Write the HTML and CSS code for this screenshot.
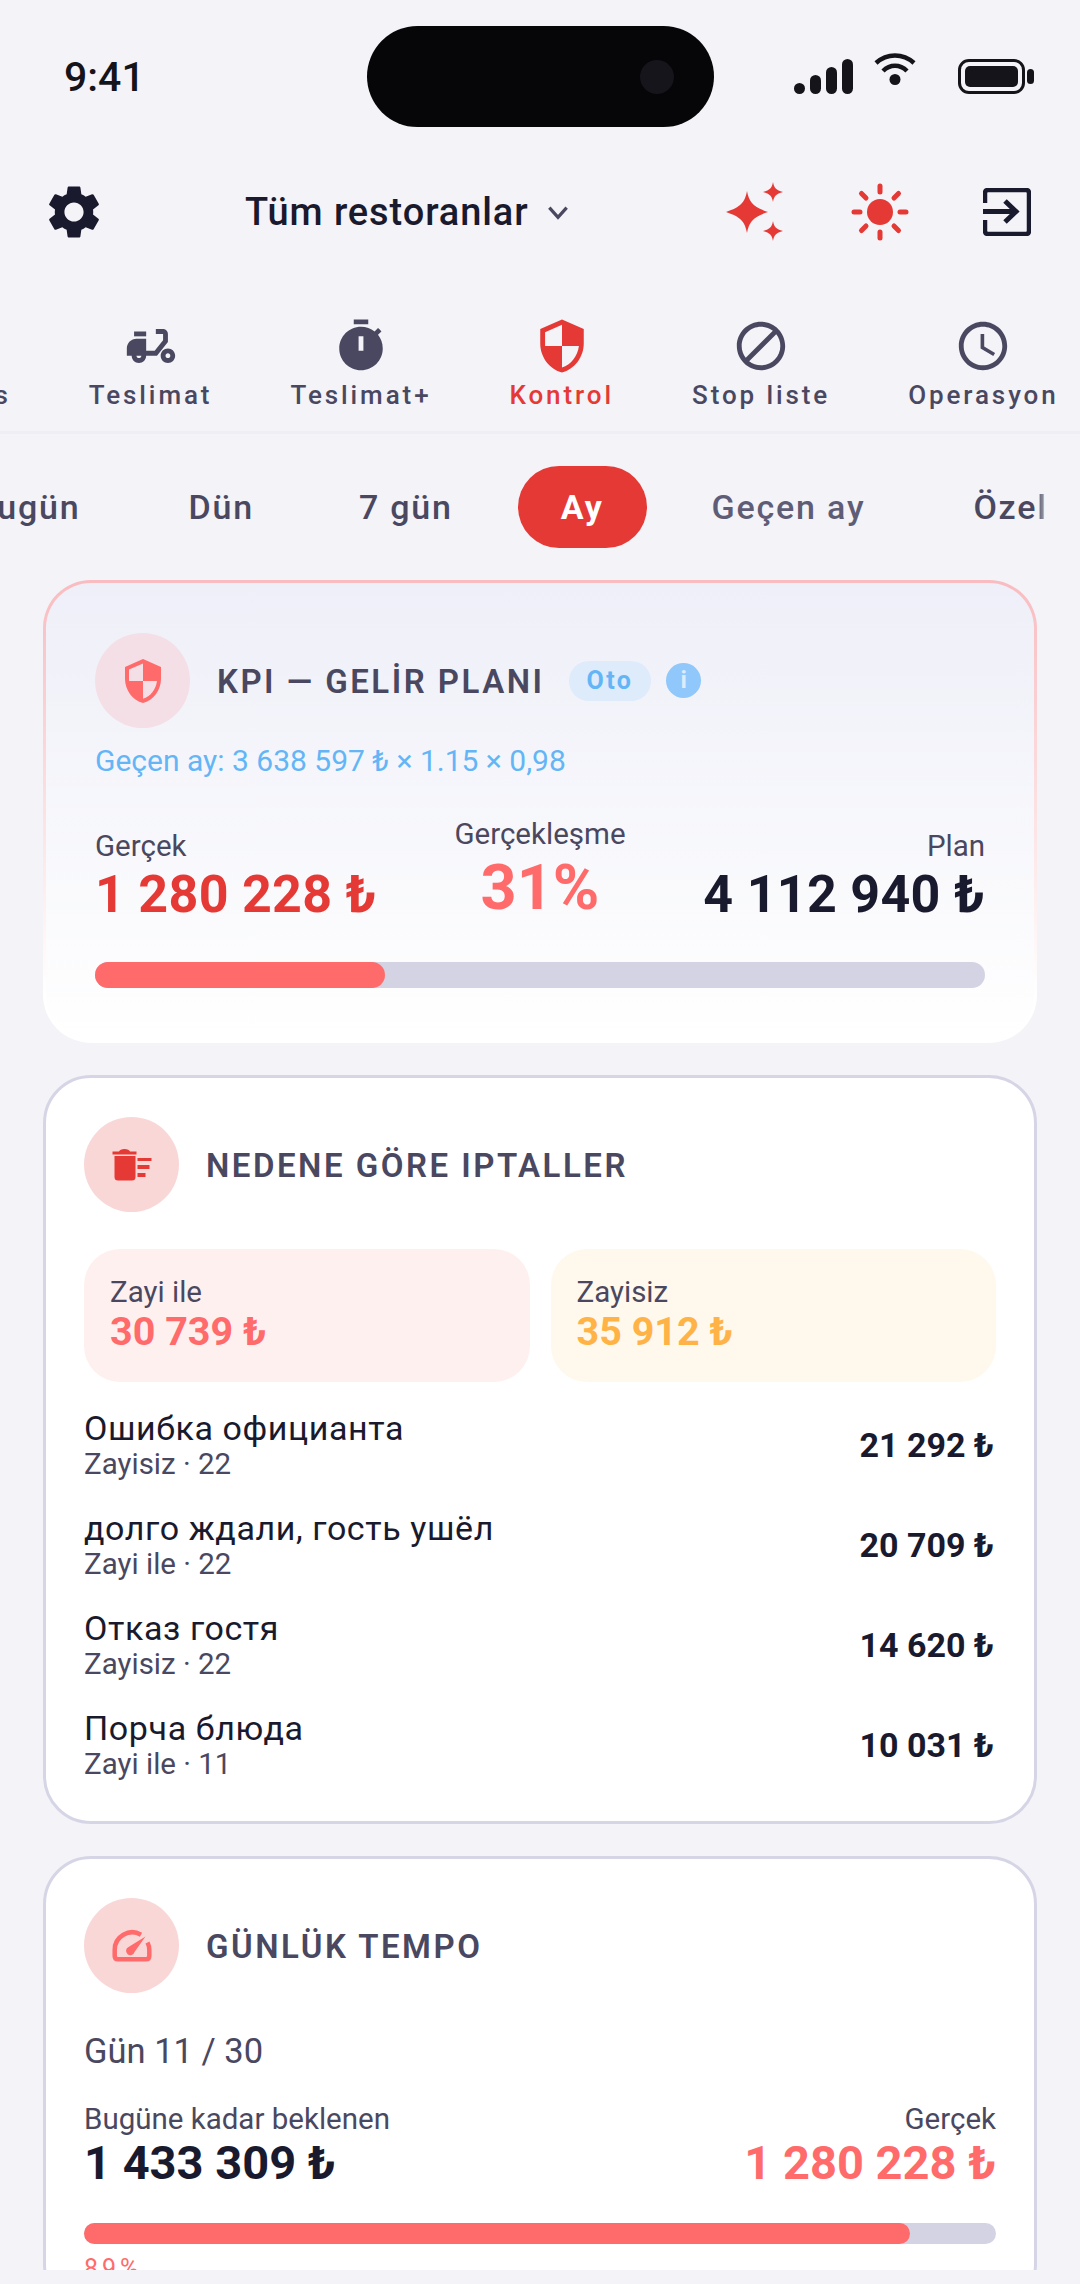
FILE: index.html
```html
<!DOCTYPE html>
<html lang="tr">
<head>
    <meta charset="UTF-8">
    <meta name="viewport" content="width=device-width, initial-scale=1.0">
    <title>Kontrol</title>
    <link rel="stylesheet" href="styles.css">
</head>
<body>
    <div class="status-bar">
        <div class="status-time">9:41</div>
        <div class="island"><span class="island-camera"></span></div>
        <div class="status-icons">
            <div class="signal">
                <span class="signal-bar signal-1"></span>
                <span class="signal-bar signal-2"></span>
                <span class="signal-bar signal-3"></span>
                <span class="signal-bar signal-4"></span>
            </div>
            <svg class="wifi" viewBox="0 0 44 36" width="44" height="36">
                <path d="M3 13C14 3 30 3 41 13" fill="none" stroke="#14141a" stroke-width="4.5"/>
                <path d="M10 21C17 14 27 14 34 21" fill="none" stroke="#14141a" stroke-width="4.5"/>
                <circle cx="22" cy="29.5" r="5.5" fill="#14141a"/>
            </svg>
            <div class="battery"><span class="battery-fill"></span></div>
            <span class="battery-cap"></span>
        </div>
    </div>

    <header class="top-bar">
        <svg class="gear" viewBox="0 0 24 24" width="64" height="64">
            <path fill="#1a1a2e" d="M19.14,12.94c0.04-0.3,0.06-0.61,0.06-0.94c0-0.32-0.02-0.64-0.07-0.94l2.03-1.58c0.18-0.14,0.23-0.41,0.12-0.61 l-1.92-3.32c-0.12-0.22-0.37-0.29-0.59-0.22l-2.39,0.96c-0.5-0.38-1.03-0.7-1.62-0.94L14.4,2.81c-0.04-0.24-0.24-0.41-0.48-0.41 h-3.84c-0.24,0-0.43,0.17-0.47,0.41L9.25,5.35C8.66,5.59,8.12,5.92,7.63,6.29L5.24,5.33c-0.22-0.08-0.47,0-0.59,0.22L2.74,8.87 C2.62,9.08,2.66,9.34,2.86,9.48l2.03,1.58C4.84,11.36,4.8,11.69,4.8,12s0.02,0.64,0.07,0.94l-2.03,1.58 c-0.18,0.14-0.23,0.41-0.12,0.61l1.92,3.32c0.12,0.22,0.37,0.29,0.59,0.22l2.39-0.96c0.5,0.38,1.03,0.7,1.62,0.94l0.36,2.54 c0.05,0.24,0.24,0.41,0.48,0.41h3.84c0.24,0,0.44-0.17,0.47-0.41l0.36-2.54c0.59-0.24,1.13-0.56,1.62-0.94l2.39,0.96 c0.22,0.08,0.47,0,0.59-0.22l1.92-3.32c0.12-0.22,0.07-0.47-0.12-0.61L19.14,12.94z M12,15.6c-1.98,0-3.6-1.62-3.6-3.6 s1.62-3.6,3.6-3.6s3.6,1.62,3.6,3.6S13.98,15.6,12,15.6z"/>
        </svg>
        <div class="place-picker">
            <span class="place-name">Tüm restoranlar</span>
            <svg viewBox="0 0 24 24" width="26" height="26"><path d="M4 8l8 9 8-9" fill="none" stroke="#4a4860" stroke-width="3"/></svg>
        </div>
        <svg class="sparkles" viewBox="0 0 60 60" width="60" height="60">
            <path fill="#e53935" d="M21 9C23 20 27 25 42 30 27 35 23 40 21 51 19 40 15 35 0 30 15 25 19 20 21 9Z"/>
            <path fill="#e53935" d="M47 0C48 6 50 8 57 10 50 12 48 14 47 20 46 14 44 12 37 10 44 8 46 6 47 0Z"/>
            <path fill="#e53935" d="M47 39C48 45 50 47 57 49 50 51 48 53 47 59 46 53 44 51 37 49 44 47 46 45 47 39Z"/>
        </svg>
        <svg class="sun" viewBox="0 0 60 60" width="60" height="60">
            <circle cx="30" cy="30" r="13" fill="#e53935"/>
            <g stroke="#e53935" stroke-width="5" stroke-linecap="round">
                <path d="M30 4V10M30 50V56M4 30H10M50 30H56M11.5 11.5L16 16M44 44L48.5 48.5M48.5 11.5L44 16M16 44L11.5 48.5"/>
            </g>
        </svg>
        <svg class="exit" viewBox="0 0 48 48" width="48" height="48">
            <path d="M2 15V5Q2 2 5 2H43Q46 2 46 5V43Q46 46 43 46H5Q2 46 2 43V32" fill="none" stroke="#1a1a2e" stroke-width="4.5"/>
            <path d="M0 23.5H32M22 13L33 23.5 22 34" fill="none" stroke="#1a1a2e" stroke-width="5"/>
        </svg>
    </header>

    <nav class="tabs">
        <div class="tab tab-first">
            <span class="tab-icon"></span>
            <span class="tab-label">Finans</span>
        </div>
        <div class="tab">
            <svg class="tab-icon" viewBox="0 0 24 24"><path d="M19,7c0-1.1-0.9-2-2-2h-3v2h3v2.65L13.52,14H10V9H6c-2.21,0-4,1.79-4,4v3h2c0,1.66,1.34,3,3,3s3-1.34,3-3h4.48L19,10.35V7z M7,17c-0.55,0-1-0.45-1-1h2C8,16.55,7.55,17,7,17z"/><rect x="5" y="6" width="5" height="2"/><path d="M19,13c-1.66,0-3,1.34-3,3s1.34,3,3,3s3-1.34,3-3S20.66,13,19,13z M19,17c-0.55,0-1-0.45-1-1s0.45-1,1-1s1,0.45,1,1S19.55,17,19,17z"/></svg>
            <span class="tab-label">Teslimat</span>
        </div>
        <div class="tab">
            <svg class="tab-icon" viewBox="0 0 24 24"><path d="M15 1H9v2h6V1zm4.03 6.39l1.42-1.42c-.43-.51-.9-.99-1.41-1.41l-1.42 1.42C16.07 4.74 14.12 4 12 4c-4.97 0-9 4.03-9 9s4.02 9 9 9 9-4.03 9-9c0-2.12-.74-4.07-1.97-5.61zM13 14h-2V8h2v6z"/></svg>
            <span class="tab-label">Teslimat+</span>
        </div>
        <div class="tab tab-active">
            <svg class="tab-icon" viewBox="0 0 24 24"><path d="M12 1L3 5v6c0 5.55 3.84 10.74 9 12 5.16-1.26 9-6.45 9-12V5l-9-4zm0 10.99h7c-.53 4.12-3.28 7.79-7 8.94V12H5V6.3l7-3.11v8.8z"/></svg>
            <span class="tab-label">Kontrol</span>
        </div>
        <div class="tab">
            <svg class="tab-icon" viewBox="0 0 24 24"><path d="M12 2C6.48 2 2 6.48 2 12s4.48 10 10 10 10-4.48 10-10S17.52 2 12 2zM4 12c0-4.42 3.58-8 8-8 1.85 0 3.55.63 4.9 1.69L5.69 16.9C4.63 15.55 4 13.85 4 12zm8 8c-1.85 0-3.55-.63-4.9-1.69L18.31 7.1C19.37 8.45 20 10.15 20 12c0 4.42-3.58 8-8 8z"/></svg>
            <span class="tab-label">Stop liste</span>
        </div>
        <div class="tab">
            <svg class="tab-icon" viewBox="0 0 24 24"><path d="M11.99 2C6.47 2 2 6.48 2 12s4.47 10 9.99 10C17.52 22 22 17.52 22 12S17.52 2 11.99 2zM12 20c-4.42 0-8-3.58-8-8s3.58-8 8-8 8 3.58 8 8-3.58 8-8 8z"/><path d="M12.5 7H11v6l5.25 3.15.75-1.23-4.5-2.67z"/></svg>
            <span class="tab-label">Operasyon</span>
        </div>
    </nav>

    <div class="periods">
        <span class="period period-first">Bugün</span>
        <span class="period">Dün</span>
        <span class="period period-week">7 gün</span>
        <span class="period period-active">Ay</span>
        <span class="period period-soft">Geçen ay</span>
        <span class="period">Özel</span>
        <span class="periods-fade"></span>
    </div>

    <main class="content">
        <section class="card card-kpi">
            <div class="card-head">
                <div class="head-icon head-icon-kpi">
                    <svg viewBox="0 0 24 24" width="48" height="48"><path fill="#ff6b6b" d="M12 1L3 5v6c0 5.55 3.84 10.74 9 12 5.16-1.26 9-6.45 9-12V5l-9-4zm0 10.99h7c-.53 4.12-3.28 7.79-7 8.94V12H5V6.3l7-3.11v8.8z"/></svg>
                </div>
                <h2 class="card-title">KPI — GELİR PLANI</h2>
                <span class="auto-badge">Oto</span>
                <span class="info-dot">i</span>
            </div>
            <div class="kpi-formula">Geçen ay: 3 638 597 ₺ × 1.15 × 0,98</div>
            <div class="kpi-stats">
                <div class="kpi-stat">
                    <div class="label">Gerçek</div>
                    <div class="kpi-value red">1 280 228 ₺</div>
                </div>
                <div class="kpi-stat kpi-stat-middle">
                    <div class="label">Gerçekleşme</div>
                    <div class="kpi-percent">31%</div>
                </div>
                <div class="kpi-stat kpi-stat-right">
                    <div class="label">Plan</div>
                    <div class="kpi-value">4 112 940 ₺</div>
                </div>
            </div>
            <div class="bar bar-kpi"><div class="bar-fill" style="width: 32.6%"></div></div>
        </section>

        <section class="card">
            <div class="card-head">
                <div class="head-icon">
                    <svg viewBox="0 0 24 24" width="48" height="48">
                        <path fill="#e53935" d="M3.25 7.5H13.75V18A1.75 1.75 0 0 1 12 19.75H5A1.75 1.75 0 0 1 3.25 18Z"/>
                        <path fill="#e53935" d="M2.25 5.25H5.5Q6 4 8.25 4 10.5 4 11 5.25H14.25V6.75H2.25Z"/>
                        <path fill="#e53935" d="M14.75 8.5H21.75V10H14.75ZM14.75 12H20.75V14H14.75ZM14.75 16H18.75V18H14.75Z"/>
                    </svg>
                </div>
                <h2 class="card-title">NEDENE GÖRE IPTALLER</h2>
            </div>
            <div class="split">
                <div class="split-box split-red">
                    <div class="label">Zayi ile</div>
                    <div class="split-value coral">30 739 ₺</div>
                </div>
                <div class="split-box split-orange">
                    <div class="label">Zayisiz</div>
                    <div class="split-value orange">35 912 ₺</div>
                </div>
            </div>
            <div class="reason-list">
                <div class="reason">
                    <div>
                        <div class="reason-name">Ошибка официанта</div>
                        <div class="reason-sub">Zayisiz · 22</div>
                    </div>
                    <div class="reason-sum">21 292 ₺</div>
                </div>
                <div class="reason">
                    <div>
                        <div class="reason-name">долго ждали, гость ушёл</div>
                        <div class="reason-sub">Zayi ile · 22</div>
                    </div>
                    <div class="reason-sum">20 709 ₺</div>
                </div>
                <div class="reason">
                    <div>
                        <div class="reason-name">Отказ гостя</div>
                        <div class="reason-sub">Zayisiz · 22</div>
                    </div>
                    <div class="reason-sum">14 620 ₺</div>
                </div>
                <div class="reason">
                    <div>
                        <div class="reason-name">Порча блюда</div>
                        <div class="reason-sub">Zayi ile · 11</div>
                    </div>
                    <div class="reason-sum">10 031 ₺</div>
                </div>
            </div>
        </section>

        <section class="card">
            <div class="card-head">
                <div class="head-icon">
                    <svg viewBox="0 0 48 48" width="48" height="48">
                        <path d="M33 12.7A17.5 17.5 0 0 0 6.7 28V34Q6.7 37.3 10 37.3H38Q41.3 37.3 41.3 34V28Q41.3 24 39.5 20.5" fill="none" stroke="#ff6b6b" stroke-width="4.5"/>
                        <path d="M37.5 14.5L26.5 30A4.3 4.3 0 1 1 20.5 25Z" fill="#ff6b6b"/>
                    </svg>
                </div>
                <h2 class="card-title">GÜNLÜK TEMPO</h2>
            </div>
            <div class="tempo-day">Gün 11 / 30</div>
            <div class="tempo-stats">
                <div>
                    <div class="label">Bugüne kadar beklenen</div>
                    <div class="tempo-value">1 433 309 ₺</div>
                </div>
                <div class="tempo-right">
                    <div class="label">Gerçek</div>
                    <div class="tempo-value coral">1 280 228 ₺</div>
                </div>
            </div>
            <div class="bar bar-tempo"><div class="bar-fill" style="width: 90.6%"></div></div>
            <div class="tempo-percent">89%</div>
        </section>
    </main>
</body>
</html>
```

FILE: styles.css
```css
* {
    box-sizing: border-box;
}

body {
    margin: 0;
    width: 1080px;
    height: 2284px;
    overflow: hidden;
    background-color: #f3f3f8;
    font-family: Roboto, 'Noto Sans', sans-serif;
    color: #1a1a2e;
}

.status-bar {
    display: flex;
    align-items: center;
    height: 101px;
    margin-top: 26px;
    padding-left: 64px;
}

.status-time {
    width: 303px;
    font-size: 41px;
    font-weight: 500;
    color: #14141a;
}

.island {
    display: flex;
    align-items: center;
    justify-content: flex-end;
    width: 347px;
    height: 101px;
    padding-right: 40px;
    border-radius: 51px;
    background-color: #060608;
}

.island-camera {
    width: 34px;
    height: 34px;
    border-radius: 50%;
    background-color: #15151b;
}

.status-icons {
    display: flex;
    align-items: flex-end;
    height: 35px;
    margin-left: 80px;
}

.signal {
    display: flex;
    align-items: flex-end;
    gap: 5px;
    height: 35px;
}

.signal-bar {
    width: 11px;
    border-radius: 6px;
    background-color: #14141a;
}

.signal-1 { height: 11px; }
.signal-2 { height: 19px; }
.signal-3 { height: 27px; }
.signal-4 { height: 35px; }

.wifi {
    margin-left: 20px;
    margin-bottom: 8px;
}

.battery {
    width: 67px;
    height: 35px;
    margin-left: 41px;
    padding: 4px;
    border: 3px solid #14141a;
    border-radius: 11px;
}

.battery-fill {
    display: block;
    height: 100%;
    border-radius: 5px;
    background-color: #14141a;
}

.battery-cap {
    width: 7px;
    height: 15px;
    margin-left: 2px;
    margin-bottom: 10px;
    border-radius: 4px;
    background-color: #14141a;
}

.top-bar {
    display: flex;
    align-items: center;
    height: 124px;
    margin-top: 23px;
    padding-left: 42px;
}

.place-picker {
    display: flex;
    align-items: center;
    gap: 16px;
    width: 472px;
    margin-left: 139px;
}

.place-name {
    font-size: 38px;
    font-weight: 500;
    letter-spacing: 0.9px;
}

.sparkles {
    margin-left: 9px;
}

.sun {
    margin-left: 64px;
}

.exit {
    margin-left: 73px;
}

.tabs {
    display: flex;
    gap: 78px;
    align-items: flex-start;
    height: 117px;
    margin-top: 43px;
    border-bottom: 3px solid #eeeef4;
}

.tab {
    display: flex;
    flex-direction: column;
    align-items: center;
    flex-shrink: 0;
    color: #4a4860;
}

.tab-first {
    margin-left: -84px;
}

.tab-icon {
    width: 58px;
    height: 58px;
    fill: currentColor;
}

.tab-label {
    margin-top: 5px;
    font-size: 26px;
    font-weight: 500;
    letter-spacing: 2.9px;
    line-height: 30px;
}

.tab-active {
    color: #e53935;
}

.periods {
    position: relative;
    display: flex;
    align-items: center;
    gap: 24px;
    height: 82px;
    margin-top: 32px;
    margin-bottom: 32px;
}

.period {
    flex-shrink: 0;
    padding: 0 42px;
    font-size: 34px;
    font-weight: 500;
    letter-spacing: 1.8px;
    line-height: 82px;
    color: #4a4860;
}

.period-first {
    margin-left: -68px;
}

.period-week {
    margin-left: -3px;
}

.period-active {
    margin: 0 -1px;
    padding: 0 43px;
    border-radius: 41px;
    background-color: #e53935;
    color: white;
    font-weight: 700;
}

.period-soft {
    color: #5f5d75;
}

.periods-fade {
    position: absolute;
    top: 0;
    right: 0;
    width: 44px;
    height: 100%;
    background: linear-gradient(90deg, rgba(243, 243, 248, 0) 0%, #f3f3f8 40%);
}

.content {
    display: flex;
    flex-direction: column;
    gap: 32px;
    height: 1690px;
    padding: 0 43px;
    overflow: hidden;
}

.card {
    flex-shrink: 0;
    padding: 39px 38px 26px;
    border: 3px solid #d6d5e6;
    border-radius: 48px;
    background-color: white;
}

.card-kpi {
    height: 463px;
    padding: 50px 49px 0;
    border-color: transparent;
    background:
        linear-gradient(180deg, #eeeff8 0%, #ffffff 100%) padding-box,
        linear-gradient(180deg, #f9bcc0 0%, #ffffff 90%) border-box;
}

.card-head {
    display: flex;
    align-items: center;
}

.head-icon {
    display: flex;
    align-items: center;
    justify-content: center;
    width: 95px;
    height: 95px;
    flex-shrink: 0;
    border-radius: 50%;
    background-color: #fad7d7;
}

.head-icon-kpi {
    background-color: #f5dfe6;
}

.card-title {
    margin: 1px 0 0 27px;
    font-size: 33px;
    font-weight: 600;
    letter-spacing: 2.5px;
    color: #4a4860;
}

.auto-badge {
    margin-left: 24px;
    padding: 0 18px;
    border-radius: 20px;
    background-color: #deebfa;
    color: #64b5f6;
    font-size: 25px;
    font-weight: 700;
    letter-spacing: 2.4px;
    line-height: 40px;
}

.info-dot {
    width: 35px;
    height: 35px;
    margin-left: 15px;
    border-radius: 50%;
    background-color: #90c8fb;
    color: #deebfa;
    font-size: 24px;
    font-weight: 700;
    line-height: 35px;
    text-align: center;
}

.kpi-formula {
    margin-top: 15px;
    font-size: 30px;
    line-height: 36px;
    color: #64b5f6;
}

.kpi-stats {
    display: flex;
    justify-content: space-between;
    align-items: flex-end;
    margin-top: 38px;
}

.label {
    font-size: 29.5px;
    line-height: 34px;
    color: #4a4860;
}

.kpi-value {
    margin-top: 3px;
    font-size: 52px;
    font-weight: 700;
    line-height: 58px;
    letter-spacing: 0.3px;
}

.kpi-stat-middle {
    text-align: center;
    margin-bottom: 1px;
}

.kpi-stat-right {
    text-align: right;
}

.kpi-percent {
    margin-top: 2px;
    font-size: 63px;
    font-weight: 700;
    line-height: 70px;
    color: #ff6b6b;
}

.red {
    color: #e53935;
}

.coral {
    color: #ff6b6b;
}

.orange {
    color: #ffb347;
}

.bar {
    height: 26px;
    border-radius: 13px;
    background-color: #d4d3e3;
}

.bar-fill {
    height: 100%;
    border-radius: 13px;
    background-color: #ff6b6b;
}

.bar-kpi {
    margin-top: 38px;
}

.split {
    display: grid;
    grid-template-columns: 1fr 1fr;
    gap: 21px;
    margin-top: 37px;
}

.split-box {
    height: 133px;
    padding: 26px 26px 0;
    border-radius: 36px;
}

.split-red {
    background-color: #fff0f0;
}

.split-orange {
    background-color: #fff8ec;
}

.split-value {
    margin-top: 1px;
    font-size: 39.5px;
    font-weight: 700;
    line-height: 44px;
}

.reason-list {
    margin-top: 13px;
}

.reason {
    display: flex;
    justify-content: space-between;
    align-items: center;
    height: 100px;
}

.reason-name {
    font-size: 34px;
    line-height: 38px;
    letter-spacing: 0.6px;
}

.reason-sub {
    margin-top: 1px;
    font-size: 29.5px;
    line-height: 33px;
    color: #4a4860;
}

.reason-sum {
    margin-right: 2px;
    font-size: 34px;
    font-weight: 700;
}

.tempo-day {
    margin-top: 38px;
    font-size: 34.5px;
    line-height: 40px;
    color: #4a4860;
}

.tempo-stats {
    display: flex;
    justify-content: space-between;
    margin-top: 31px;
}

.tempo-right {
    text-align: right;
}

.tempo-value {
    font-size: 47px;
    font-weight: 700;
    line-height: 54px;
}

.bar-tempo {
    height: 21px;
    margin-top: 33px;
}

.tempo-percent {
    margin-top: 10px;
    font-size: 25px;
    letter-spacing: 4px;
    color: #ff6b6b;
}
```
